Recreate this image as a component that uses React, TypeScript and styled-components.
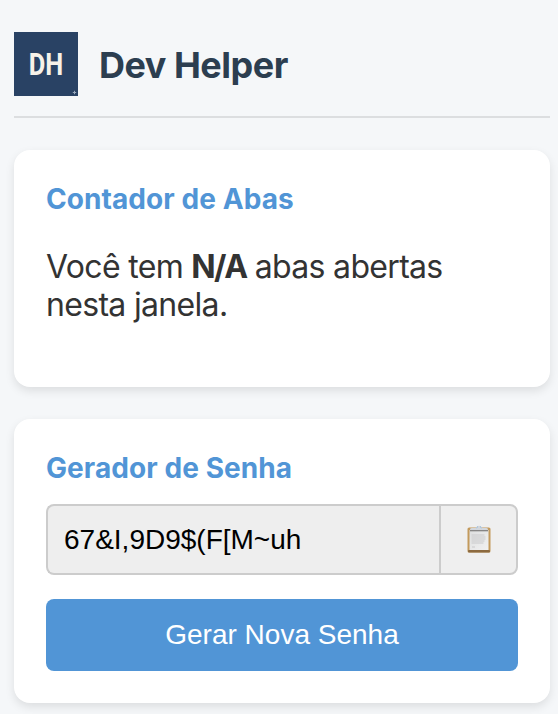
import React from 'react';
import styled, { createGlobalStyle } from 'styled-components';

const GlobalStyle = createGlobalStyle`
  *, *::before, *::after { box-sizing: border-box; }
  html { background: #f5f7f9; }
  body {
    margin: 0;
    height: 714px;
    overflow: hidden;
    background: #f5f7f9;
    color: #333;
    font-family: Inter, 'Liberation Sans', sans-serif;
  }
  h1, h2, p { margin: 0; }
`;

const Popup = styled.main`
  width: 558px;
  padding: 32px 8px 0 14px;
`;

const Header = styled.header`
  display: flex;
  align-items: center;
  gap: 21px;
  height: 86px;
  padding-bottom: 20px;
  margin-bottom: 32px;
  border-bottom: 2px solid #dcdee0;
`;

const Logo = styled.svg`
  display: block;
  width: 64px;
  height: 64px;
  flex: none;
`;

const LogoText = styled.text`
  fill: #f7f2e9;
  font: 700 30.5px Roboto, sans-serif;
`;

const Title = styled.h1`
  color: #2c3e50;
  font-size: 36px;
  font-weight: 700;
  line-height: 44px;
  letter-spacing: -0.5px;
  padding-top: 2px;
  white-space: nowrap;
`;

const Card = styled.section<{ $height: number }>`
  height: ${({ $height }) => $height}px;
  margin-bottom: 32px;
  padding: 32px;
  border-radius: 16px;
  background: #fff;
  box-shadow: 0 4px 10px rgba(0, 0, 0, 0.1);
`;

const CardTitle = styled.h2`
  color: #5195d6;
  font-size: 28px;
  font-weight: 700;
  line-height: 34px;
  letter-spacing: 0.08px;
  white-space: nowrap;
`;

const Message = styled.p`
  margin-top: 32px;
  font-size: 32px;
  line-height: 38px;
  letter-spacing: -0.68px;
`;

const Count = styled.strong`
  letter-spacing: -1.6px;
`;

const Line = styled.span`
  display: block;
  white-space: nowrap;
`;

const PasswordRow = styled.div`
  display: flex;
  height: 71px;
  margin: 19px 0 24px;
`;

const PasswordField = styled.input`
  width: 393px;
  min-width: 0;
  padding: 0 16px;
  border: 2px solid #ccc;
  border-right: 0;
  border-radius: 8px 0 0 8px;
  outline: 0;
  background: #eee;
  color: #000;
  font: 28px 'Liberation Sans', Arial, sans-serif;
`;

const CopyButton = styled.button`
  display: flex;
  flex: 1;
  align-items: center;
  justify-content: center;
  padding: 0 0 2px 0;
  border: 2px solid #ccc;
  border-radius: 0 8px 8px 0;
  background: #efefef;
`;

const GenerateButton = styled.button`
  display: block;
  width: 100%;
  height: 72px;
  padding: 0;
  border: 0;
  border-radius: 8px;
  background: #5195d6;
  color: #fff;
  font: 28px 'Liberation Sans', Arial, sans-serif;
`;

const ClipboardIcon = () => (
  <svg width="24" height="28" viewBox="0 0 24 28" aria-hidden="true">
    <defs>
      <linearGradient id="paper" x1="0" y1="0" x2="1" y2="1">
        <stop offset="0" stopColor="#dedfe0" />
        <stop offset="1" stopColor="#f1f1f1" />
      </linearGradient>
    </defs>
    <rect x="0.5" y="2.5" width="23" height="25" rx="1.6" fill="#c39a5c" />
    <rect x="1" y="25" width="22" height="2.5" rx="1" fill="#8c6a40" />
    <rect x="2.5" y="5" width="19" height="20" fill="url(#paper)" />
    <path d="M4.5 10h13M4.5 12h14M4.5 14h14M4.5 16h13M4.5 18h12M5 22h3" stroke="#c9cacc" strokeWidth="1.1" />
    <path d="M3 6V4.4Q3 3 5 3h3.5L10 1.5Q12 -0.2 14 1.5L15.5 3H19q2 0 2 1.4V6z" fill="#d2d6dc" />
    <path d="M3 5.7h18" stroke="#7d7c7b" strokeWidth="1.2" />
    <path d="M9.5 2.8l1.4-1.2M13.1 1.6l1.4 1.2" stroke="#86b5dc" strokeWidth="1" />
  </svg>
);

export default function App() {
  return (
    <>
      <GlobalStyle />
      <Popup>
        <Header>
          <Logo viewBox="0 0 64 64" role="img" aria-label="DH">
            <rect width="64" height="64" fill="#294264" />
            <LogoText x="14.8" y="43" textLength="34.5" lengthAdjust="spacingAndGlyphs">DH</LogoText>
            <path d="M60.5 58.8v3.4M58.8 60.5h3.4" stroke="#9baabd" strokeWidth="1" />
          </Logo>
          <Title>Dev Helper</Title>
        </Header>
        <Card $height={237}>
          <CardTitle>Contador de Abas</CardTitle>
          <Message>
            <Line>Você tem <Count>N/A</Count> abas abertas</Line>
            <Line>nesta janela.</Line>
          </Message>
        </Card>
        <Card $height={284}>
          <CardTitle>Gerador de Senha</CardTitle>
          <PasswordRow>
            <PasswordField aria-label="Senha" readOnly value="67&amp;I,9D9$(F[M~uh" />
            <CopyButton aria-label="Copiar senha"><ClipboardIcon /></CopyButton>
          </PasswordRow>
          <GenerateButton>Gerar Nova Senha</GenerateButton>
        </Card>
      </Popup>
    </>
  );
}
